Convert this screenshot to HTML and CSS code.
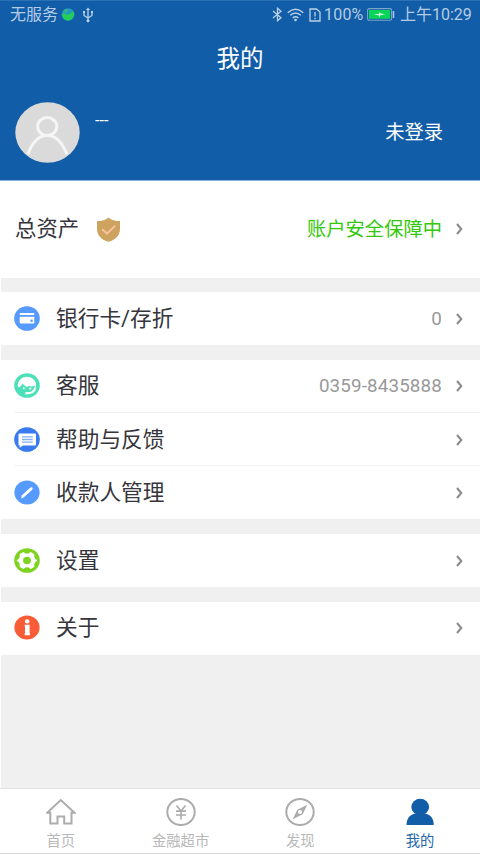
FILE: index.html
```html
<!DOCTYPE html>
<html lang="zh-CN">
<head>
<meta charset="utf-8">
<title>我的</title>
<link rel="stylesheet" href="styles.css">
</head>
<body>
<div class="app">
  <header class="header">
    <div class="status">
      <span class="carrier">无服务</span>
      <svg class="globe" width="14" height="13" viewBox="0 0 14 13"><ellipse cx="7" cy="6.5" rx="6.5" ry="6.2" fill="#2399bd"/><path d="M1 7 3 5 6 7 9 6 12 3 13.3 6 11 11 7 12.7 3 11Z" fill="#24cf54"/><path d="M3 2 6 1 7 3 4 5Z" fill="#35b58d"/></svg>
      <svg class="usb" width="12" height="16" viewBox="0 0 12 16" fill="none" stroke="#b9d1e9" stroke-width="1.3"><path d="M6 2V14M6 11 2 8.5V5M6 11 10 8.5V5"/><path d="M4 3 6 .5 8 3ZM1 4H3V6H1ZM9 4H11V6H9Z" fill="#b9d1e9" stroke="none"/><circle cx="6" cy="13.7" r="1.5" fill="#b9d1e9" stroke="none"/></svg>
      <span class="spacer"></span>
      <svg class="bt" width="11" height="15" viewBox="0 0 11 15" fill="none" stroke="#b9d1e9" stroke-width="1.3"><path d="M1 4 9 10.7 5.5 13.7V1.3L9 4.3 1 11"/></svg>
      <svg class="wifi" width="17" height="14" viewBox="0 0 17 14" fill="none" stroke="#b9d1e9" stroke-width="1.5"><path d="M.7 4.7Q8.5-2.1 16.3 4.7M3.2 7.3Q8.5 2.7 13.8 7.3M5.7 10Q8.5 7.5 11.3 10"/><circle cx="8.5" cy="12" r="1.3" fill="#b9d1e9" stroke="none"/></svg>
      <svg class="sim" width="12" height="14" viewBox="0 0 12 14" fill="none" stroke="#b9d1e9" stroke-width="1.3"><path d="M1 1H7.5L11 4V13H1ZM6 4V8.5M6 9.7V11.2"/></svg>
      <span class="percent">100%</span>
      <svg class="battery" width="28" height="13" viewBox="0 0 28 13"><rect x=".6" y=".6" width="24" height="11.6" rx="1.5" fill="none" stroke="#7ba6c9" stroke-width="1.1"/><rect x="2" y="2" width="21.2" height="8.8" fill="#08d458"/><path d="M6.5 6.5 12 5.7 12.5 4 14 5.6 18.5 6.3 13.5 7.2 12.5 9 11.5 7.2Z" fill="#c9ffdc"/><path d="M26.5 3V10" stroke="#a6c4e1" stroke-width="1.6"/></svg>
      <span class="time">上午10:29</span>
    </div>
    <h1 class="title">我的</h1>
    <div class="profile">
      <svg class="avatar" width="65" height="61" viewBox="0 0 65 61"><ellipse cx="32.5" cy="30.5" rx="32.2" ry="30.2" fill="#dadada"/><g fill="none" stroke="#f5f5f5" stroke-width="3"><ellipse cx="32.2" cy="24.5" rx="9.6" ry="9"/><path d="M12.8 52.5C17 41 23.5 33.6 32.3 33.6S47.5 41 52 52.5"/></g></svg>
      <span class="name">---</span>
      <span class="login">未登录</span>
    </div>
  </header>

  <main class="content">
    <section class="group">
      <div class="row assets">
        <span class="label">总资产</span>
        <svg class="shield" width="25" height="25" viewBox="0 0 25 25"><path d="M12.5.4C15.5 3 19 4 24 4V12C24 18.5 19 23 12.5 24.7 6 23 1 18.5 1 12V4C6 4 9.5 3 12.5.4Z" fill="#cda35f"/><path d="M6.2 12.2 11 16.6 19.2 8.6" fill="none" stroke="#fac09f" stroke-width="2"/></svg>
        <span class="value safe">账户安全保障中</span>
        <svg class="chevron" width="7" height="12" viewBox="0 0 7 12"><path d="M1 1 5.3 6 1 11"/></svg>
      </div>
    </section>
    <section class="group">
      <div class="row">
        <svg class="icon" viewBox="0 0 26 25"><ellipse cx="13" cy="12.5" rx="12.8" ry="12.3" fill="#559afc"/><path d="M5.7 9V7.7Q5.7 7 6.5 7H19.5Q20.3 7 20.3 7.7V9ZM5.7 10.7H20.3V16.7Q20.3 17.5 19.5 17.5H6.5Q5.7 17.5 5.7 16.7Z" fill="#fff"/><circle cx="17.6" cy="14.7" r="1.2" fill="#559afc"/></svg>
        <span class="label">银行卡/存折</span>
        <span class="value">0</span>
        <svg class="chevron" width="7" height="12" viewBox="0 0 7 12"><path d="M1 1 5.3 6 1 11"/></svg>
      </div>
    </section>
    <section class="group">
      <div class="row">
        <svg class="icon" viewBox="0 0 26 25"><ellipse cx="13" cy="12.5" rx="12.8" ry="12.3" fill="#4ce0b8"/><path d="M4 14.5C2.8 8 7.5 3.7 13 3.7S23.2 8 22 14.5L20.5 12.8 17.5 13.8 15.5 12.8 12.7 14 8.5 10.8C7.5 12.7 6 14.2 4 14.5Z" fill="#fff"/><path d="M21.3 14.5C20.5 18.2 18 20.2 13.5 20.3" fill="none" stroke="#fff" stroke-width="2"/><ellipse cx="13" cy="20.2" rx="2.1" ry="1.3" fill="#fff"/><circle cx="9.8" cy="15.2" r="1" fill="#fff"/><circle cx="16.2" cy="15.6" r="1.1" fill="#fff"/></svg>
        <span class="label">客服</span>
        <span class="value">0359-8435888</span>
        <svg class="chevron" width="7" height="12" viewBox="0 0 7 12"><path d="M1 1 5.3 6 1 11"/></svg>
      </div>
      <div class="row">
        <svg class="icon" viewBox="0 0 26 25"><ellipse cx="13" cy="12.5" rx="12.8" ry="12.3" fill="#397af1"/><path d="M5.5 6.5H21Q22 6.5 22 7.5V17.5Q22 18.5 21 18.5H9L5.7 20.7V18.5Q4.5 18.5 4.5 17.5V7.5Q4.5 6.5 5.5 6.5Z" fill="#fff"/><path d="M8 9.8H18.7M8 12.5H18.7M8 15.2H18.7" stroke="#82aef6" stroke-width="1.3"/></svg>
        <span class="label">帮助与反馈</span>
        <svg class="chevron" width="7" height="12" viewBox="0 0 7 12"><path d="M1 1 5.3 6 1 11"/></svg>
      </div>
      <div class="row">
        <svg class="icon" viewBox="0 0 26 25"><ellipse cx="13" cy="12.5" rx="12.6" ry="12" fill="#559afc"/><path d="M7 18.4 8 15.2 15.8 8Q17.5 6.7 18.4 7.6 19.2 8.5 18 10L9.9 17.3Z" fill="#fff"/></svg>
        <span class="label">收款人管理</span>
        <svg class="chevron" width="7" height="12" viewBox="0 0 7 12"><path d="M1 1 5.3 6 1 11"/></svg>
      </div>
    </section>
    <section class="group">
      <div class="row">
        <svg class="icon" viewBox="0 0 26 25"><ellipse cx="13" cy="12.5" rx="12.8" ry="12.3" fill="#7ed321"/><path d="M9.2 4.8Q13 8 16.8 4.8L19.7 6.5Q18.8 10.5 22.5 12.5 18.8 14.5 19.7 18.5L16.8 20.2Q13 17 9.2 20.2L6.3 18.5Q7.2 14.5 3.5 12.5 7.2 10.5 6.3 6.5Z" fill="#fff" stroke="#fff" stroke-width="1.4" stroke-linejoin="round"/><ellipse cx="13" cy="12.5" rx="3.9" ry="3.7" fill="#7ed321"/></svg>
        <span class="label">设置</span>
        <svg class="chevron" width="7" height="12" viewBox="0 0 7 12"><path d="M1 1 5.3 6 1 11"/></svg>
      </div>
    </section>
    <section class="group">
      <div class="row">
        <svg class="icon" viewBox="0 0 26 25"><ellipse cx="13" cy="12.5" rx="12.6" ry="12.1" fill="#fa5c38"/><ellipse cx="13.2" cy="6.4" rx="2.3" ry="2.1" fill="#fff"/><path d="M10.7 9.7H15.6V18.3H16V20.2H10.7V18.3H11V11.5H10.7Z" fill="#fff"/></svg>
        <span class="label">关于</span>
        <svg class="chevron" width="7" height="12" viewBox="0 0 7 12"><path d="M1 1 5.3 6 1 11"/></svg>
      </div>
    </section>
    <div class="rest"></div>
  </main>

  <nav class="tabs">
    <div class="tab">
      <svg width="30" height="28" viewBox="0 0 30 28" fill="none" stroke="#acacac" stroke-width="2"><path d="M1.2 14.7 14.8 2 28.5 14.7H25.5V25.5H18.2V18.5H11.5V25.5H4.3V14.7Z"/></svg>
      <span>首页</span>
    </div>
    <div class="tab">
      <svg width="30" height="28" viewBox="0 0 30 28" fill="none" stroke="#acacac" stroke-width="2"><ellipse cx="15" cy="14" rx="13.7" ry="13"/><path d="M10.5 7.5 15 13 19.5 7.5M15 13V21.5M10 13.2H20M10 17H20" stroke-width="1.7"/></svg>
      <span>金融超市</span>
    </div>
    <div class="tab">
      <svg width="30" height="28" viewBox="0 0 30 28" fill="none" stroke="#acacac" stroke-width="2"><ellipse cx="15" cy="14" rx="13.7" ry="13"/><path d="M22.3 6.8 17.7 16.2 7.7 21.2 12.3 11.8Z" fill="#acacac" stroke="none"/><circle cx="15" cy="14" r="2" fill="#fff" stroke="none"/></svg>
      <span>发现</span>
    </div>
    <div class="tab active">
      <svg width="30" height="28" viewBox="0 0 30 28" fill="#125da7"><ellipse cx="15.2" cy="9" rx="8.9" ry="8.3"/><path d="M1.5 27C1.7 20 5 16.5 10.5 15.5H20C25.3 16.5 28.6 20 28.8 27Z"/></svg>
      <span>我的</span>
    </div>
  </nav>
</div>
</body>
</html>
```
FILE: styles.css
```css
* { box-sizing: border-box; }

body {
  margin: 0;
  font-family: Roboto, "Noto Sans CJK SC", sans-serif;
  background: #fff;
}

.app {
  display: flex;
  flex-direction: column;
  width: 480px;
  height: 854px;
  overflow: hidden;
}

.header {
  height: 181px;
  flex: none;
  background: #125da7;
  border-top: 1px solid #2a72b4;
  border-bottom: 1px solid #8ab0d5;
  color: #fff;
}

.status {
  display: flex;
  align-items: center;
  height: 27px;
  padding: 0 9px 0 10px;
  color: #b4cce6;
  font-size: 16px;
  line-height: 27px;
  white-space: nowrap;
}

.carrier { width: 48px; }
.globe { margin-left: 3px; }
.usb { margin-left: 7px; }
.spacer { flex: 1; }
.wifi { margin-left: 4px; }
.sim { margin-left: 5px; }
.percent { margin-left: 3px; letter-spacing: 0.2px; width: 39px; }
.battery { margin-left: 4px; }
.time { margin-left: 5px; width: 71px; letter-spacing: 0; }

.title {
  margin: 13px 0 0;
  height: 36px;
  font-size: 23.5px;
  line-height: 36px;
  font-weight: 400;
  text-align: center;
}

.profile {
  display: flex;
  align-items: flex-start;
  padding: 25px 37px 0 15px;
}

.name {
  margin: 8px 0 0 15px;
  font-size: 17px;
  line-height: 20px;
  transform: scaleX(0.95);
  transform-origin: left;
}

.login {
  margin: 17px 0 0 auto;
  font-size: 19.3px;
  line-height: 28px;
}

.content {
  display: flex;
  flex-direction: column;
  gap: 14.4px;
  flex: 1;
  margin-left: 1px;
  background: #f0f0f0;
}

.group { background: #fff; }

.row {
  display: flex;
  align-items: center;
  height: 53.3px;
  padding: 0 17px 0 13px;
  position: relative;
}

.row + .row::before {
  content: "";
  position: absolute;
  top: -1px;
  left: 14px;
  right: 0;
  height: 1px;
  background: #f1eff0;
}

.assets { height: 96.5px; padding-left: 14px; }

.icon { width: 26px; height: 25px; margin-right: 16px; margin-top: -1px; }

.label {
  color: #35353b;
  font-size: 21.7px;
  line-height: 32px;
}

.assets .label { font-size: 21.4px; }

.shield { margin-left: 17px; }

.value {
  margin-left: auto;
  margin-right: 14px;
  color: #999;
  font-size: 18.8px;
  letter-spacing: 0.15px;
}

.safe { color: #34c80c; font-size: 19.3px; letter-spacing: 0; margin-top: -2px; }

.chevron {
  fill: none;
  stroke: #8a8a8a;
  stroke-width: 2;
  margin-left: auto;
}

.value + .chevron { margin-left: 0; }

.tabs {
  display: grid;
  grid-template-columns: repeat(4, 1fr);
  flex: none;
  height: 66px;
  padding-left: 1px;
  background: #fff;
  border-top: 1px solid #e2e2e2;
  border-bottom: 1px solid #d8d8d8;
}

.tab {
  display: flex;
  flex-direction: column;
  align-items: center;
  padding-top: 9px;
  color: #b8b8b8;
  font-size: 14.3px;
  line-height: 20px;
}

.tab span { margin-top: 5px; }
.tab.active { color: #2467ad; }
```
